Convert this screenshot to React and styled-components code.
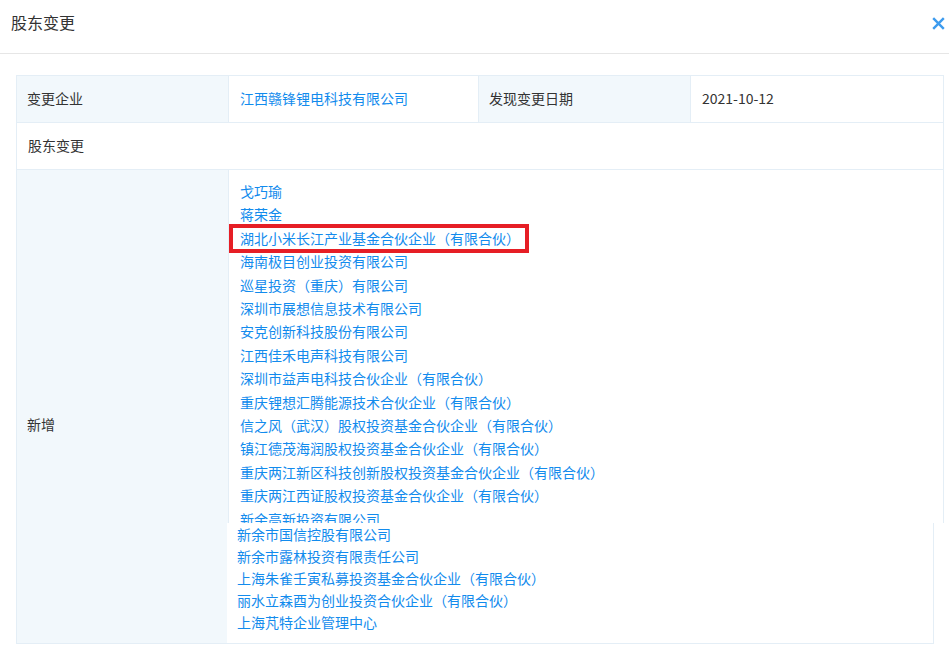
import React from "react";
import styled, { createGlobalStyle } from "styled-components";

const Global = createGlobalStyle`
  html, body { margin: 0; padding: 0; background: #fff; }
  body {
    font-family: "Noto Sans CJK SC", "Noto Sans", "Liberation Sans", sans-serif;
    color: #333;
  }
  * { box-sizing: border-box; }
`;

const Modal = styled.div`
  width: 949px;
  height: 650px;
  overflow: hidden;
  background: #fff;
`;

const Header = styled.div`
  height: 54px;
  display: flex;
  align-items: flex-start;
  justify-content: space-between;
  padding: 11px 4px 0 11px;
  border-bottom: 1px solid #e6e6e6;
`;

const Title = styled.div`
  font-size: 16px;
  line-height: 23px;
  color: #333;
`;

const Close = styled.button`
  border: 0;
  background: none;
  padding: 0;
  margin-top: 6px;
  width: 13px;
  height: 13px;
  display: flex;
  cursor: pointer;
`;

const Body = styled.div`
  padding: 21px 5px 0 16px;
`;

const Table = styled.div`
  display: grid;
  grid-template-columns: 212px 250px 212px 1fr;
  border-top: 1px solid #e4eef6;
  border-left: 1px solid #e4eef6;
  font-size: 14px;
`;

const Cell = styled.div`
  border-right: 1px solid #e4eef6;
  border-bottom: 1px solid #e4eef6;
  height: 47px;
  display: flex;
  align-items: center;
  padding-left: ${(p) => (p.$label ? "10px" : "11px")};
  padding-bottom: 2px;
  background: ${(p) => (p.$label ? "#f2f8fc" : "#fff")};
  color: ${(p) => (p.$link ? "#128bed" : "#333")};
  grid-column: ${(p) => p.$span || "auto"};
`;

const LabelCell = styled.div`
  border-right: 1px solid #e4eef6;
  border-bottom: 1px solid #e4eef6;
  background: #f2f8fc;
  padding: 244px 0 0 10px;
  line-height: 20px;
`;

const ValueCell = styled.div`
  grid-column: 2 / 5;
  display: flex;
  flex-direction: column;
`;

const TopList = styled.div`
  height: 353px;
  overflow: hidden;
  border-right: 1px solid #e4eef6;
  padding: 10px 0 0 11px;
`;

const BottomList = styled.div`
  margin: 0 10px 0 -2px;
  background: #fff;
  border-right: 1px solid #e4eef6;
  border-bottom: 1px solid #e4eef6;
  padding: 0 0 10px 10px;
`;

const Item = styled.div`
  color: #128bed;
  line-height: ${(p) => (p.$compact ? "22px" : "23.4px")};
  white-space: nowrap;
  position: relative;
  width: max-content;
  &::after {
    content: "";
    display: ${(p) => (p.$marked ? "block" : "none")};
    position: absolute;
    left: -11px;
    right: -9px;
    top: -3px;
    bottom: -3px;
    border: 4px solid #e61e25;
  }
`;

const topItems = [
  "戈巧瑜",
  "蒋荣金",
  "湖北小米长江产业基金合伙企业（有限合伙）",
  "海南极目创业投资有限公司",
  "巡星投资（重庆）有限公司",
  "深圳市展想信息技术有限公司",
  "安克创新科技股份有限公司",
  "江西佳禾电声科技有限公司",
  "深圳市益声电科技合伙企业（有限合伙）",
  "重庆锂想汇腾能源技术合伙企业（有限合伙）",
  "信之风（武汉）股权投资基金合伙企业（有限合伙）",
  "镇江德茂海润股权投资基金合伙企业（有限合伙）",
  "重庆两江新区科技创新股权投资基金合伙企业（有限合伙）",
  "重庆两江西证股权投资基金合伙企业（有限合伙）",
  "新余高新投资有限公司",
];

const bottomItems = [
  "新余市国信控股有限公司",
  "新余市露林投资有限责任公司",
  "上海朱雀壬寅私募投资基金合伙企业（有限合伙）",
  "丽水立森酉为创业投资合伙企业（有限合伙）",
  "上海芃特企业管理中心",
];

export default function App() {
  return (
    <>
      <Global />
      <Modal>
        <Header>
          <Title>股东变更</Title>
          <Close aria-label="关闭">
            <svg width="13" height="13" viewBox="0 0 13 13">
              <path d="M1.2 1.2 L11.8 11.8 M11.8 1.2 L1.2 11.8" stroke="#3d9bee" strokeWidth="2.4" strokeLinecap="butt" />
            </svg>
          </Close>
        </Header>
        <Body>
          <Table>
            <Cell $label>变更企业</Cell>
            <Cell $link>江西赣锋锂电科技有限公司</Cell>
            <Cell $label>发现变更日期</Cell>
            <Cell>2021-10-12</Cell>
            <Cell $span="1 / 5">股东变更</Cell>
            <LabelCell>新增</LabelCell>
            <ValueCell>
              <TopList>
                {topItems.map((t, i) => (
                  <Item key={t} $marked={i === 2}>{t}</Item>
                ))}
              </TopList>
              <BottomList>
                {bottomItems.map((t) => (
                  <Item key={t} $compact>{t}</Item>
                ))}
              </BottomList>
            </ValueCell>
          </Table>
        </Body>
      </Modal>
    </>
  );
}
